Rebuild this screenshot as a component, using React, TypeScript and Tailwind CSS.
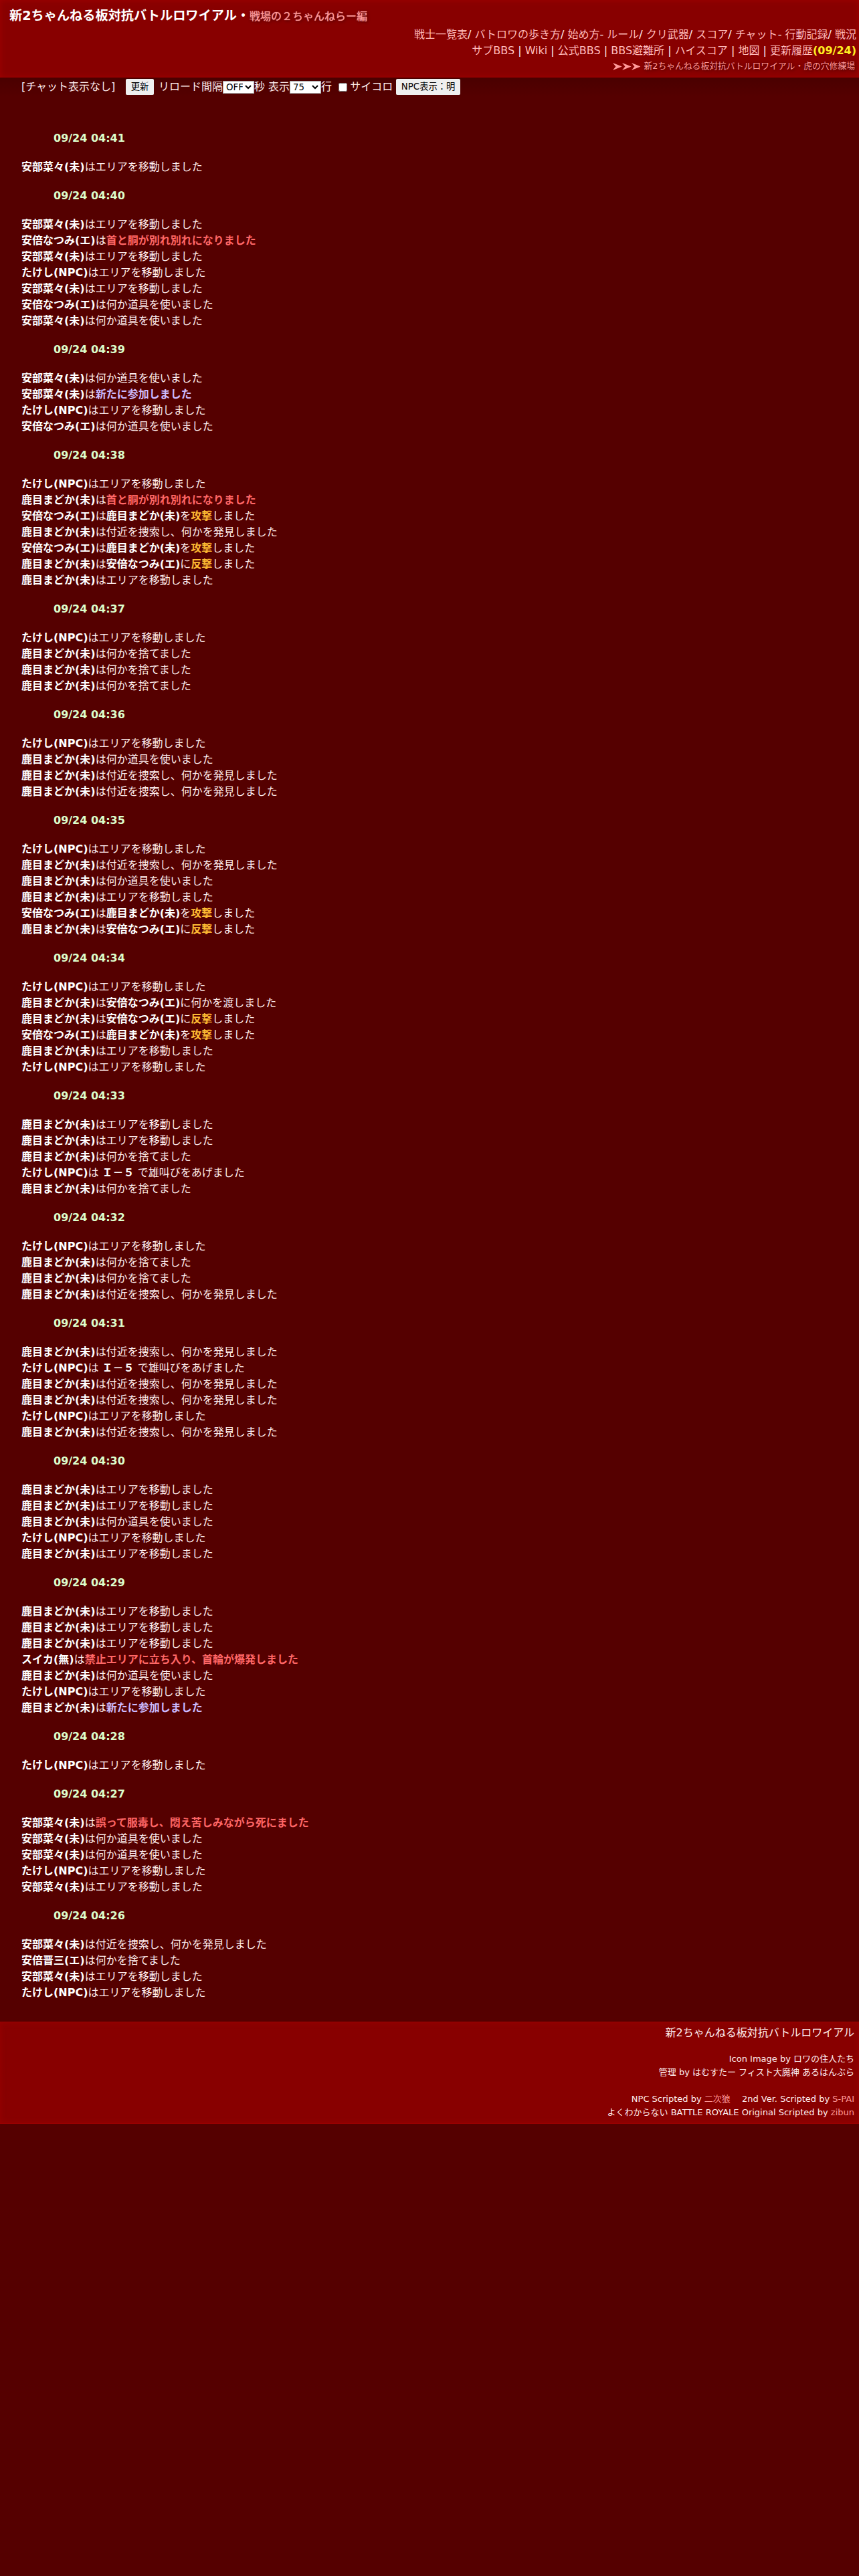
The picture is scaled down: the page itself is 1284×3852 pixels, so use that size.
import React from 'react';

type Group = {
  time: string;
  lines: string[];
};

// *name*  !death!  ^attack^  +join+
const move = (name: string) => `*${name}*はエリアを移動しました`;
const item = (name: string) => `*${name}*は何か道具を使いました`;
const drop = (name: string) => `*${name}*は何かを捨てました`;
const search = (name: string) => `*${name}*は付近を捜索し、何かを発見しました`;
const join = (name: string) => `*${name}*は+新たに参加しました+`;
const behead = (name: string) => `*${name}*は!首と胴が別れ別れになりました!`;
const attack = (from: string, to: string) => `*${from}*は*${to}*を^攻撃^しました`;
const counter = (from: string, to: string) => `*${from}*は*${to}*に^反撃^しました`;

const NANA = '安部菜々(未)';
const NATSUMI = '安倍なつみ(エ)';
const MADOKA = '鹿目まどか(未)';
const TAKESHI = 'たけし(NPC)';
const shout = `*${TAKESHI}*は *Ｉ－５* で雄叫びをあげました`;

const groups: Group[] = [
  { time: '04:41', lines: [move(NANA)] },
  {
    time: '04:40',
    lines: [move(NANA), behead(NATSUMI), move(NANA), move(TAKESHI), move(NANA), item(NATSUMI), item(NANA)],
  },
  { time: '04:39', lines: [item(NANA), join(NANA), move(TAKESHI), item(NATSUMI)] },
  {
    time: '04:38',
    lines: [
      move(TAKESHI),
      behead(MADOKA),
      attack(NATSUMI, MADOKA),
      search(MADOKA),
      attack(NATSUMI, MADOKA),
      counter(MADOKA, NATSUMI),
      move(MADOKA),
    ],
  },
  { time: '04:37', lines: [move(TAKESHI), drop(MADOKA), drop(MADOKA), drop(MADOKA)] },
  { time: '04:36', lines: [move(TAKESHI), item(MADOKA), search(MADOKA), search(MADOKA)] },
  {
    time: '04:35',
    lines: [
      move(TAKESHI),
      search(MADOKA),
      item(MADOKA),
      move(MADOKA),
      attack(NATSUMI, MADOKA),
      counter(MADOKA, NATSUMI),
    ],
  },
  {
    time: '04:34',
    lines: [
      move(TAKESHI),
      `*${MADOKA}*は*${NATSUMI}*に何かを渡しました`,
      counter(MADOKA, NATSUMI),
      attack(NATSUMI, MADOKA),
      move(MADOKA),
      move(TAKESHI),
    ],
  },
  { time: '04:33', lines: [move(MADOKA), move(MADOKA), drop(MADOKA), shout, drop(MADOKA)] },
  { time: '04:32', lines: [move(TAKESHI), drop(MADOKA), drop(MADOKA), search(MADOKA)] },
  {
    time: '04:31',
    lines: [search(MADOKA), shout, search(MADOKA), search(MADOKA), move(TAKESHI), search(MADOKA)],
  },
  { time: '04:30', lines: [move(MADOKA), move(MADOKA), item(MADOKA), move(TAKESHI), move(MADOKA)] },
  {
    time: '04:29',
    lines: [
      move(MADOKA),
      move(MADOKA),
      move(MADOKA),
      '*スイカ(無)*は!禁止エリアに立ち入り、首輪が爆発しました!',
      item(MADOKA),
      move(TAKESHI),
      join(MADOKA),
    ],
  },
  { time: '04:28', lines: [move(TAKESHI)] },
  {
    time: '04:27',
    lines: [
      `*${NANA}*は!誤って服毒し、悶え苦しみながら死にました!`,
      item(NANA),
      item(NANA),
      move(TAKESHI),
      move(NANA),
    ],
  },
  { time: '04:26', lines: [search(NANA), drop('安倍晋三(エ)'), move(NANA), move(TAKESHI)] },
];

const markStyles: Record<string, string> = {
  '*': 'text-white',
  '!': 'text-[#ff6666]',
  '^': 'text-[#ffbb33]',
  '+': 'text-[#ccbbff]',
};

const LogLine: React.FC<{ text: string }> = ({ text }) => (
  <li className="whitespace-pre">
    {text.split(/([*!^+][^*!^+]+[*!^+])/).map((part, i) =>
      markStyles[part[0]] ? (
        <b key={i} className={markStyles[part[0]]}>{part.slice(1, -1)}</b>
      ) : (
        part
      )
    )}
  </li>
);

const NavLinks: React.FC<{ items: string[]; separators: string[] }> = ({ items, separators }) => (
  <>
    {items.map((label, i) => (
      <React.Fragment key={label}>
        <a href="#" className="text-[#ffbbbb]">{label}</a>
        {separators[i]}
      </React.Fragment>
    ))}
  </>
);

const Arrowhead: React.FC = () => (
  <svg viewBox="0 0 14 11" className="h-[11px] w-[13.7px]" fill="currentColor">
    <path d="M0 0 L14 5.5 L0 11 L4.5 5.5 Z" />
  </svg>
);

export default function App() {
  return (
    <div className="min-h-[3852px] bg-[#550000] font-['DejaVu_Sans','Noto_Sans_CJK_JP',sans-serif] text-base leading-6 text-[#ffeeee]">
      <header className="h-[116px] bg-[#880000] pl-3.5 pr-1 pt-3 shadow-[inset_0_0_10px_#a00000]">
        <h1 className="h-7 text-[19.2px] font-bold leading-6 text-white">
          新2ちゃんねる板対抗バトルロワイアル・
          <a href="#" className="text-base font-normal text-[#ff9999] [text-shadow:0_0_1px_#ff9999,1px_1px_4px_#330000]">戦場の２ちゃんねらー編</a>
        </h1>
        <nav className="text-right">
          <div>
            <NavLinks
              items={['戦士一覧表', 'バトロワの歩き方', '始め方', 'ルール', 'クリ武器', 'スコア', 'チャット', '行動記録', '戦況']}
              separators={['/ ', '/ ', '- ', '/ ', '/ ', '/ ', '- ', '/ ', '']}
            />
          </div>
          <div>
            <NavLinks
              items={['サブBBS', 'Wiki', '公式BBS', 'BBS避難所', 'ハイスコア', '地図', '更新履歴']}
              separators={[' | ', ' | ', ' | ', ' | ', ' | ', ' | ', '']}
            />
            <b className="text-[#ffee22]">(09/24)</b>
          </div>
          <div className="-mt-px flex items-center justify-end pr-0.5 text-[12.8px] text-[#ff9999]">
            <Arrowhead />
            <Arrowhead />
            <Arrowhead />
            <a href="#" className="ml-[5px] [text-shadow:1px_1px_4px_#330000]">新2ちゃんねる板対抗バトルロワイアル・虎の穴修練場</a>
          </div>
        </nav>
      </header>

      <form className="flex h-7 items-center bg-linear-to-b from-[#4a0000] to-[#550000] pl-8">
        <span className="w-[156px]">[チャット表示なし]</span>
        <button type="button" className="h-6 w-[42px] rounded-[2px] bg-[#efefef] text-[13.33px] text-black">更新</button>
        <span className="ml-[7px]">リロード間隔</span>
        <select className="mt-px h-[19px] w-[47px] border border-[#aaaaaa] bg-white text-[13.33px] leading-4 text-black">
          <option>OFF</option>
        </select>
        <span className="whitespace-pre">秒 表示</span>
        <select className="mt-px h-[19px] w-[47px] border border-[#aaaaaa] bg-white text-[13.33px] leading-4 text-black">
          <option>75</option>
        </select>
        <span>行</span>
        <input type="checkbox" id="dice" className="ml-2.5 mr-1 mt-px size-[13px]" />
        <label htmlFor="dice">サイコロ</label>
        <button type="button" className="ml-[5px] h-6 w-24 rounded-[2px] bg-[#efefef] text-[13.33px] text-black">NPC表示：明</button>
      </form>

      <main className="pb-[31px] pt-8">
        {groups.map((group) => (
          <section key={group.time}>
            <h2 className="py-[19px] pl-20 font-bold text-[#ddffcc]">09/24 {group.time}</h2>
            <ul className="pl-8">
              {group.lines.map((line, i) => (
                <LogLine key={i} text={line} />
              ))}
            </ul>
          </section>
        ))}
      </main>

      <footer className="h-[153px] border-y border-[#990000] bg-[#880000] pr-[7px] pt-1 text-right text-[13px] leading-5 shadow-[inset_0_0_8px_#990000]">
        <p className="mb-[17px] text-base leading-6">新2ちゃんねる板対抗バトルロワイアル</p>
        <p>Icon Image by ロワの住人たち</p>
        <p className="mb-5">管理 by はむすたー フィスト大魔神 あるはんぶら</p>
        <p>NPC Scripted by <a href="#" className="text-[#ff9999]">二次狼</a>　 2nd Ver. Scripted by <a href="#" className="text-[#ff9999]">S-PAI</a></p>
        <p>よくわからない BATTLE ROYALE Original Scripted by <a href="#" className="text-[#ff9999]">zibun</a></p>
      </footer>
    </div>
  );
}
